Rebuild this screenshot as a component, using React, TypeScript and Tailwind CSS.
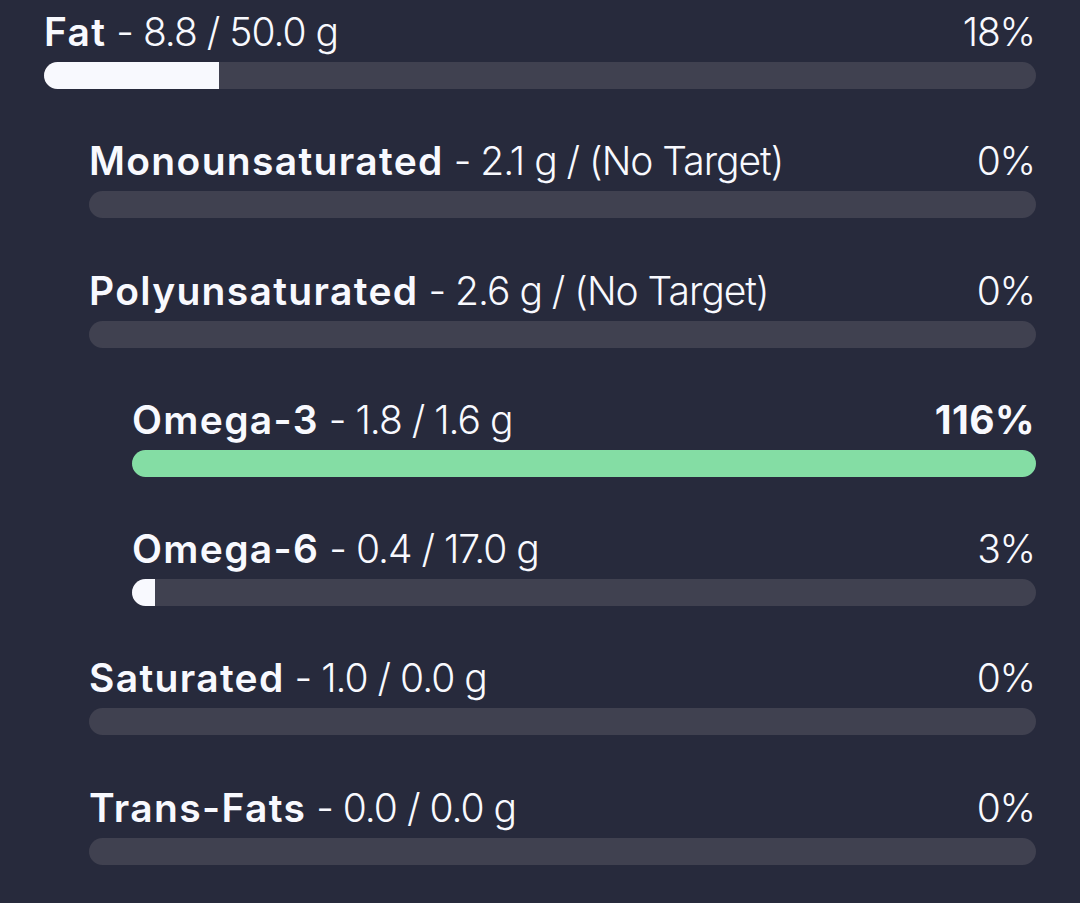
import React from "react";

type Row = {
  label: string;
  value: string;
  pct: string;
  fill: number;
  level: 0 | 1 | 2;
  color?: "white" | "green";
  boldPct?: boolean;
};

const rows: Row[] = [
  { label: "Fat", value: "8.8 / 50.0 g", pct: "18%", fill: 17.6, level: 0, color: "white" },
  { label: "Monounsaturated", value: "2.1 g / (No Target)", pct: "0%", fill: 0, level: 1 },
  { label: "Polyunsaturated", value: "2.6 g / (No Target)", pct: "0%", fill: 0, level: 1 },
  { label: "Omega-3", value: "1.8 / 1.6 g", pct: "116%", fill: 100, level: 2, color: "green", boldPct: true },
  { label: "Omega-6", value: "0.4 / 17.0 g", pct: "3%", fill: 2.5, level: 2, color: "white" },
  { label: "Saturated", value: "1.0 / 0.0 g", pct: "0%", fill: 0, level: 1 },
  { label: "Trans-Fats", value: "0.0 / 0.0 g", pct: "0%", fill: 0, level: 1 },
];

function NutrientRow({ r }: { r: Row }) {
  const indent = r.level === 0 ? "pl-0" : r.level === 1 ? "pl-[45px]" : "pl-[88px]";
  const fillColor = r.color === "green" ? "bg-[#84dda4]" : "bg-[#f8f9fe]";
  return (
    <div className={indent}>
      <div className="flex items-baseline justify-between text-[39px] leading-[44px] text-[#f8f9fe]">
        <div className="whitespace-nowrap">
          <span className="font-semibold tracking-[0.034em]">{r.label}</span>
          <span className="font-light tracking-[-0.026em]"> - {r.value}</span>
        </div>
        <div
          className={`${r.boldPct ? "font-bold tracking-[0.01em]" : "font-light tracking-[-0.03em]"} pr-[1px]`}
        >
          {r.pct}
        </div>
      </div>
      <div className="mt-[8px] h-[27px] w-full overflow-hidden rounded-full bg-[#404150]">
        {r.fill > 0 && <div className={`h-full ${fillColor}`} style={{ width: `${r.fill}%` }} />}
      </div>
    </div>
  );
}

export default function App() {
  return (
    <div
      className="min-h-[903px] w-[1080px] bg-[#272a3c] px-[44px] pt-[10px]"
      style={{ fontFamily: "Inter, 'Noto Sans', sans-serif" }}
    >
      <div className="flex flex-col gap-[50.3px]">
        {rows.map((r) => (
          <NutrientRow key={r.label} r={r} />
        ))}
      </div>
    </div>
  );
}
